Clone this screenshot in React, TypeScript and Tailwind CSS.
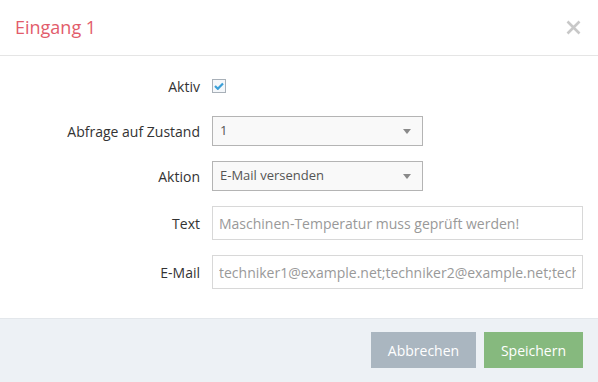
import { ReactNode } from "react";

function Row({ label, children, h }: { label: string; children: ReactNode; h: string }) {
  return (
    <div className={`flex items-center ${h}`}>
      <label className="w-[185px] shrink-0 text-right text-[14px] font-normal text-[#333]">{label}</label>
      <div className="ml-3 flex h-full flex-1 items-center">{children}</div>
    </div>
  );
}

function Select({ value }: { value: string }) {
  return (
    <div className="flex h-[30px] w-[211px] items-center justify-between border border-[#b4b4b4] bg-[#f9f9f9] pl-[7px] pr-[11px] text-[13px] text-[#555]">
      <span>{value}</span>
      <svg width="8" height="5" viewBox="0 0 8 5">
        <path d="M0 0h8L4 5z" fill="#8a8a8a" />
      </svg>
    </div>
  );
}

export default function App() {
  return (
    <div className="flex h-[382px] w-[598px] flex-col bg-white font-['Open_Sans',sans-serif]">
      <header className="flex h-[56px] shrink-0 items-center justify-between border-b border-[#e5e5e5] pl-[15px] pr-[17px]">
        <h1 className="text-[18px] text-[#e25c6b]">Eingang 1</h1>
        <button className="text-[#c8c8c8]">
          <svg width="15" height="15" viewBox="0 0 15 15">
            <path d="M1.5 1.5l12 12M13.5 1.5l-12 12" stroke="currentColor" strokeWidth="2.6" />
          </svg>
        </button>
      </header>

      <div className="flex flex-1 flex-col gap-[15px] px-[15px] pt-[15px]">
        <Row label="Aktiv" h="h-[30px]">
          <span className="flex h-[14px] w-[14px] items-center justify-center border border-[#a8b0b8] bg-[#f4f7fa]">
            <svg width="10" height="8" viewBox="0 0 10 8">
              <path d="M1 4l2.8 2.8L9 1.4" stroke="#3a9fd8" strokeWidth="2.2" fill="none" />
            </svg>
          </span>
        </Row>
        <Row label="Abfrage auf Zustand" h="h-[30px]">
          <Select value="1" />
        </Row>
        <Row label="Aktion" h="h-[30px]">
          <Select value="E-Mail versenden" />
        </Row>
        <Row label="Text" h="h-[34px]">
          <input
            readOnly
            value="Maschinen-Temperatur muss geprüft werden!"
            className="h-[34px] w-full border border-[#d8d8d8] bg-white px-[6px] text-[14px] text-[#999] outline-none"
          />
        </Row>
        <Row label="E-Mail" h="h-[34px]">
          <input
            readOnly
            value="techniker1@example.net;techniker2@example.net;techniker3@example.net"
            className="h-[34px] w-full border border-[#d8d8d8] bg-white px-[6px] text-[14px] text-[#999] outline-none"
          />
        </Row>
      </div>

      <footer className="flex h-[64px] shrink-0 items-start justify-end gap-2 border-t border-[#e3e7eb] bg-[#edf1f5] pr-[15px] pt-[13px]">
        <button className="h-[36px] w-[105px] bg-[#aab6c0] text-[14px] text-white">Abbrechen</button>
        <button className="h-[36px] w-[99px] bg-[#86b97e] text-[14px] text-white">Speichern</button>
      </footer>
    </div>
  );
}
